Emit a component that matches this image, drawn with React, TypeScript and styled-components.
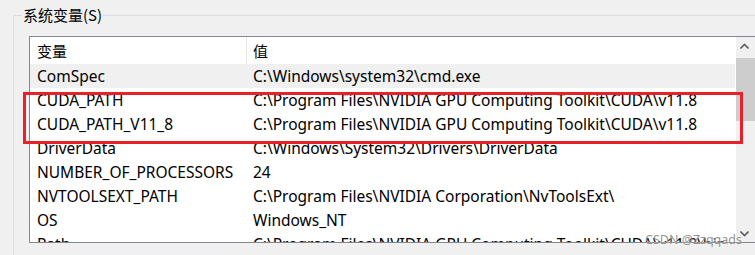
import styled, { createGlobalStyle } from "styled-components";

const GlobalStyle = createGlobalStyle`
  html, body {
    margin: 0;
    background: #f0f0f0;
    overflow: hidden;
  }
  body {
    font-family: "Noto Sans", "Noto Sans CJK SC", sans-serif;
    font-size: 15.5px;
    color: #000;
  }
`;

const Page = styled.div`
  position: relative;
  width: 755px;
  height: 255px;
  padding-top: 5px;
  box-sizing: border-box;
  overflow: hidden;
`;

const GroupBox = styled.fieldset`
  margin: 0 0 0 13px;
  padding: 11px 0 0 15px;
  width: 800px;
  height: 300px;
  border: 1px solid #dcdcdc;
  box-sizing: border-box;
`;

const Legend = styled.legend`
  margin-left: -7px;
  padding: 0 1px;
  line-height: 20px;
  font-family: "Noto Sans CJK SC", sans-serif;
  font-size: 15px;
`;

const ListBox = styled.div`
  display: flex;
  width: 740px;
  height: 207px;
  border: 1px solid #828790;
  background: #fff;
  box-sizing: border-box;
  overflow: hidden;
`;

const Table = styled.div`
  width: 705px;
  flex: none;
`;

const Row = styled.div<{ $height?: number; $selected?: boolean }>`
  display: flex;
  align-items: center;
  height: ${(p) => p.$height ?? 24}px;
  background: ${(p) => (p.$selected ? "#f0f0f0" : "#fff")};
  white-space: nowrap;
`;

const NameCell = styled.div<{ $header?: boolean }>`
  width: 217px;
  height: 100%;
  padding-left: 7px;
  box-sizing: border-box;
  display: flex;
  align-items: center;
  border-right: 1px solid ${(p) => (p.$header ? "#e5e5e5" : "transparent")};
  font-family: ${(p) =>
    p.$header ? '"Noto Sans CJK SC", sans-serif' : '"Noto Sans", sans-serif'};
  font-size: ${(p) => (p.$header ? "15px" : "15.5px")};
`;

const ValueCell = styled.div<{ $header?: boolean }>`
  padding-left: 6px;
  font-family: ${(p) =>
    p.$header ? '"Noto Sans CJK SC", sans-serif' : '"Noto Sans", sans-serif'};
  font-size: ${(p) => (p.$header ? "15px" : "15.5px")};
`;

const ScrollBar = styled.div`
  flex: none;
  width: 20px;
  margin-left: 1px;
  background: #f0f0f0;
  display: flex;
  flex-direction: column;
`;

const ArrowButton = styled.div`
  height: 17px;
  width: 17px;
  display: flex;
  align-items: center;
  justify-content: center;
`;

const Track = styled.div`
  flex: 1;
  padding-top: 4px;
`;

const Thumb = styled.div`
  height: 63px;
  width: 19px;
  background: #cdcdcd;
`;

const Highlight = styled.div`
  position: absolute;
  left: 23px;
  top: 92px;
  width: 720px;
  height: 52px;
  border: 3px solid #e8202a;
  box-sizing: border-box;
  pointer-events: none;
`;

const Watermark = styled.div`
  position: absolute;
  left: 645px;
  top: 231px;
  font-family: "Noto Sans", sans-serif;
  font-size: 12.5px;
  color: rgba(110, 110, 110, 0.75);
  text-shadow: 0 0 2px rgba(255, 255, 255, 0.8);
`;

const Chevron = ({ up }: { up?: boolean }) => (
  <svg width="9" height="6" viewBox="0 0 9 6">
    <path
      d={up ? "M0.5 5.5 L4.5 1.5 L8.5 5.5" : "M0.5 0.5 L4.5 4.5 L8.5 0.5"}
      fill="none"
      stroke="#606060"
      strokeWidth="1.6"
    />
  </svg>
);

const rows: [string, string][] = [
  ["ComSpec", "C:\\Windows\\system32\\cmd.exe"],
  ["CUDA_PATH", "C:\\Program Files\\NVIDIA GPU Computing Toolkit\\CUDA\\v11.8"],
  ["CUDA_PATH_V11_8", "C:\\Program Files\\NVIDIA GPU Computing Toolkit\\CUDA\\v11.8"],
  ["DriverData", "C:\\Windows\\System32\\Drivers\\DriverData"],
  ["NUMBER_OF_PROCESSORS", "24"],
  ["NVTOOLSEXT_PATH", "C:\\Program Files\\NVIDIA Corporation\\NvToolsExt\\"],
  ["OS", "Windows_NT"],
  ["Path", "C:\\Program Files\\NVIDIA GPU Computing Toolkit\\CUDA\\v11.8\\bin"],
];

export default function App() {
  return (
    <Page>
      <GlobalStyle />
      <GroupBox>
        <Legend>系统变量(S)</Legend>
        <ListBox>
          <Table>
            <Row $height={27}>
              <NameCell $header>变量</NameCell>
              <ValueCell $header>值</ValueCell>
            </Row>
            {rows.map(([name, value], i) => (
              <Row key={name} $selected={i === 0}>
                <NameCell>{name}</NameCell>
                <ValueCell>{value}</ValueCell>
              </Row>
            ))}
          </Table>
          <ScrollBar>
            <ArrowButton>
              <Chevron up />
            </ArrowButton>
            <Track>
              <Thumb />
            </Track>
            <ArrowButton>
              <Chevron />
            </ArrowButton>
          </ScrollBar>
        </ListBox>
      </GroupBox>
      <Highlight />
      <Watermark>CSDN @Zzqqads</Watermark>
    </Page>
  );
}
